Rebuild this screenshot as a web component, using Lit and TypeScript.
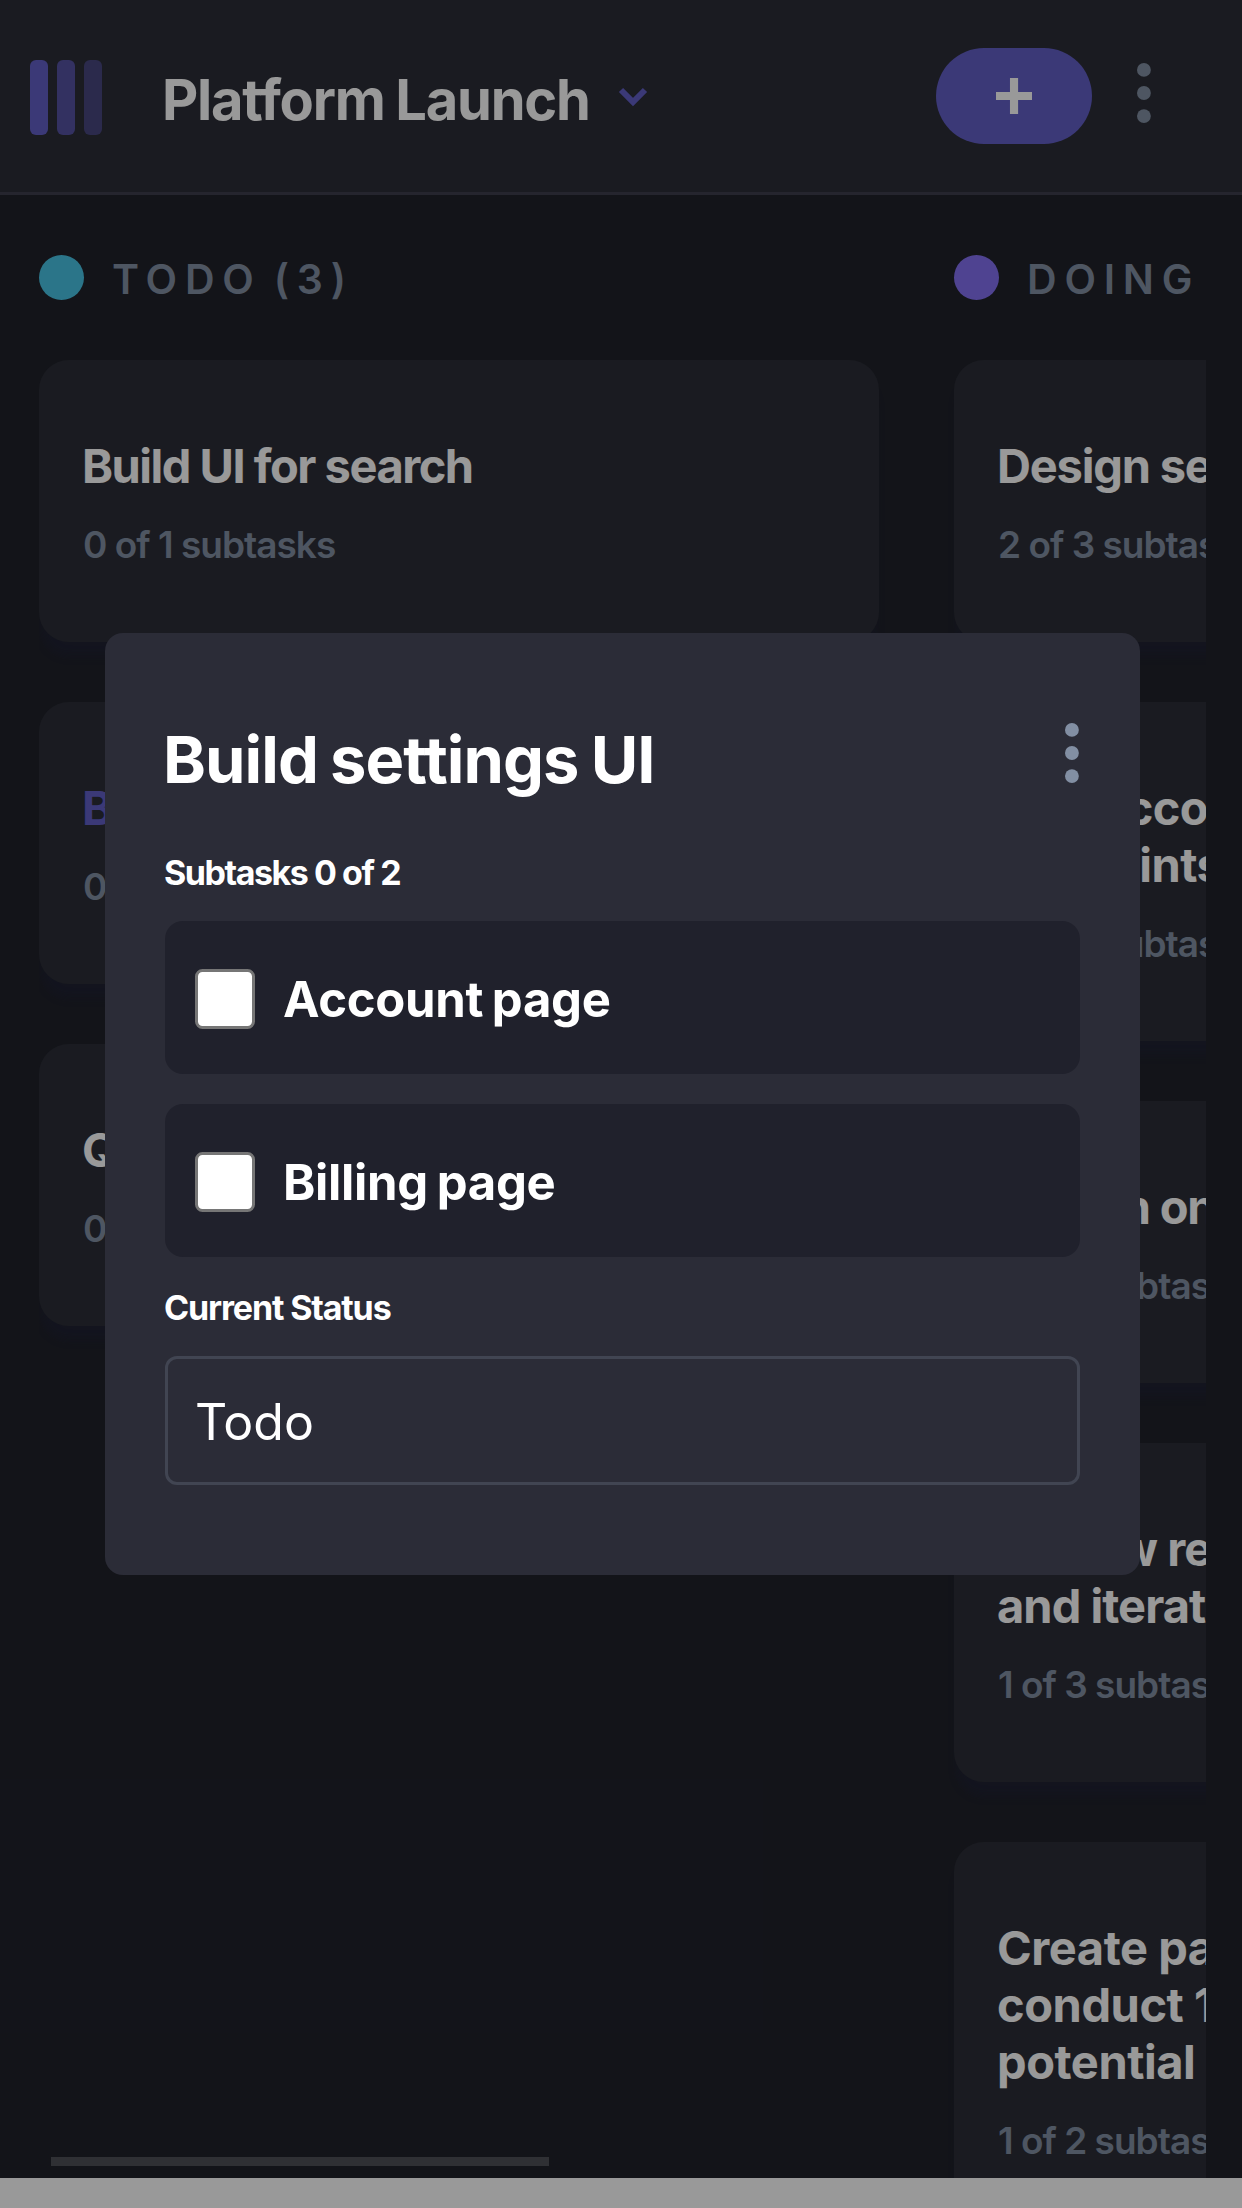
import { LitElement, html, css, svg } from "lit";
import { customElement, property } from "lit/decorators.js";
import { styleMap } from "lit/directives/style-map.js";
import { classMap } from "lit/directives/class-map.js";

interface Task {
  lines: string[];
  done: number;
  total: number;
  tracking: number;
  active?: boolean;
}

interface Column {
  name: string;
  tone: "teal" | "violet";
  tasks: Task[];
}

const COLUMNS: Column[] = [
  {
    name: "TODO (3)",
    tone: "teal",
    tasks: [
      { lines: ["Build UI for search"], done: 0, total: 1, tracking: -1.5 },
      { lines: ["Build settings UI"], done: 0, total: 2, tracking: -1.5, active: true },
      { lines: ["QA and test all major user journeys"], done: 0, total: 2, tracking: -1.5 },
    ],
  },
  {
    name: "DOING (6)",
    tone: "violet",
    tasks: [
      { lines: ["Design settings screen"], done: 2, total: 3, tracking: -1.2 },
      { lines: ["Add account management", "endpoints"], done: 2, total: 3, tracking: -0.6 },
      { lines: ["Design onboarding flow"], done: 1, total: 3, tracking: -1.2 },
      { lines: ["Review results of usability tests", "and iterate"], done: 1, total: 3, tracking: -0.95 },
      {
        lines: ["Create paper prototypes and", "conduct 10 usability tests with", "potential customers"],
        done: 1,
        total: 2,
        tracking: -0.45,
      },
    ],
  },
];

const dots = svg`
  <circle cx="2.308" cy="2.308" r="2.308"/>
  <circle cx="2.308" cy="10" r="2.308"/>
  <circle cx="2.308" cy="17.692" r="2.308"/>`;

@customElement("board-header")
export class BoardHeader extends LitElement {
  static styles = css`
    :host {
      display: flex;
      align-items: center;
      box-sizing: border-box;
      height: 195px;
      padding: 0 90px 0 30px;
      background: #2c2e37;
      border-bottom: 3px solid #3e3f4e;
    }
    .logo {
      width: 72px;
      height: 75px;
      margin-top: 3px;
    }
    .title {
      width: 456px;
      margin: 8px 0 0 60px;
      font-size: 56px;
      line-height: 70px;
      font-weight: 700;
      letter-spacing: -1.24px;
      word-spacing: -1.2px;
      white-space: nowrap;
      color: #fff;
    }
    .chevron {
      width: 30px;
      height: 21px;
      margin-top: 3px;
      overflow: visible;
    }
    .add {
      display: flex;
      align-items: center;
      justify-content: center;
      width: 156px;
      height: 96px;
      margin-left: auto;
      border-radius: 48px;
      background: #635fc7;
    }
    .plus {
      width: 36px;
      height: 36px;
    }
    .more {
      width: 15px;
      height: 60px;
      margin: -6px 0 0 45px;
      fill: #828fa3;
    }
  `;

  render() {
    return html`
      <svg class="logo" viewBox="0 0 24 25" fill="#635fc7">
        <rect width="6" height="25" rx="2" />
        <rect x="9" width="6" height="25" rx="2" opacity=".75" />
        <rect x="18" width="6" height="25" rx="2" opacity=".5" />
      </svg>
      <div class="title">Platform Launch</div>
      <svg class="chevron" viewBox="0 0 10 7" fill="none" stroke="#635fc7" stroke-width="2">
        <path d="m1 1 4 4 4-4" />
      </svg>
      <div class="add">
        <svg class="plus" viewBox="0 0 12 12" fill="#fff">
          <path d="M7.368 12V7.344H12V4.632H7.368V0H4.656v4.632H0v2.712h4.656V12z" />
        </svg>
      </div>
      <svg class="more" viewBox="0 0 5 20">${dots}</svg>
    `;
  }
}

@customElement("task-card")
export class TaskCard extends LitElement {
  @property({ attribute: false }) task!: Task;

  static styles = css`
    :host {
      display: block;
      box-sizing: border-box;
      width: 840px;
      padding: 77px 43px 75px;
      border-radius: 30px;
      background: #2c2e37;
      box-shadow: 0 17px 8px -3px rgba(34, 36, 72, 0.28);
      white-space: nowrap;
    }
    .name {
      margin-bottom: 28px;
      font-size: 47px;
      line-height: 57px;
      font-weight: 700;
      color: #fff;
    }
    .active {
      color: #635fc7;
    }
    .count {
      margin-left: 1px;
      font-size: 37px;
      line-height: 45px;
      font-weight: 600;
      letter-spacing: -1px;
      color: #828fa3;
    }
  `;

  render() {
    const t = this.task;
    return html`
      <div
        class=${classMap({ name: true, active: !!t.active })}
        style=${styleMap({ letterSpacing: `${t.tracking}px` })}
      >
        ${t.lines.map((line) => html`<div>${line}</div>`)}
      </div>
      <div class="count">${t.done} of ${t.total} subtasks</div>
    `;
  }
}

@customElement("task-dialog")
export class TaskDialog extends LitElement {
  static styles = css`
    :host {
      display: block;
      box-sizing: border-box;
      width: 1035px;
      padding: 87px 60px 90px;
      border-radius: 18px;
      background: #2b2c37;
      color: #fff;
      white-space: nowrap;
    }
    .top {
      display: flex;
      justify-content: space-between;
      align-items: flex-start;
      margin-bottom: 52px;
    }
    .title {
      margin-left: -2px;
      font-size: 65px;
      line-height: 80px;
      font-weight: 700;
      letter-spacing: -0.94px;
      word-spacing: -2.35px;
    }
    .more {
      width: 15px;
      height: 60px;
      margin-top: 3px;
      fill: #828fa3;
    }
    .label {
      margin: 0 0 27px -1px;
      font-size: 34px;
      line-height: 42px;
      font-weight: 700;
    }
    .progress {
      letter-spacing: -1.45px;
    }
    .status {
      letter-spacing: -1.15px;
    }
    .subtasks {
      display: flex;
      flex-direction: column;
      gap: 30px;
      margin-bottom: 30px;
    }
    .subtask {
      display: flex;
      align-items: center;
      gap: 28px;
      box-sizing: border-box;
      height: 153px;
      padding: 3px 30px 0;
      border-radius: 18px;
      background: #20212c;
      font-size: 49px;
      line-height: 60px;
      font-weight: 700;
      letter-spacing: -0.3px;
      word-spacing: -2.5px;
    }
    .text {
      margin-top: 2px;
    }
    .box {
      box-sizing: border-box;
      width: 60px;
      height: 60px;
      border: 3px solid #767676;
      border-radius: 7.5px;
      background: #fff;
    }
    .select {
      display: flex;
      align-items: center;
      box-sizing: border-box;
      height: 129px;
      padding: 3px 27px 0;
      border: 3px solid rgba(130, 143, 163, 0.25);
      border-radius: 12px;
      font-size: 50px;
      line-height: 60px;
    }
  `;

  render() {
    return html`
      <div class="top">
        <div class="title">Build settings UI</div>
        <svg class="more" viewBox="0 0 5 20">${dots}</svg>
      </div>
      <div class="label progress">Subtasks 0 of 2</div>
      <div class="subtasks">
        ${["Account page", "Billing page"].map(
          (s) => html`<div class="subtask"><span class="box"></span><span class="text">${s}</span></div>`,
        )}
      </div>
      <div class="label status">Current Status</div>
      <div class="select">Todo</div>
    `;
  }
}

@customElement("app-root")
export class AppRoot extends LitElement {
  static styles = css`
    :host {
      display: block;
      position: relative;
      height: 2208px;
      overflow: hidden;
      background: #fff;
      font-family: Inter, "Liberation Sans", sans-serif;
    }
    .page {
      display: flex;
      flex-direction: column;
      height: 2178px;
      background: #20222b;
    }
    .board {
      position: relative;
      flex: 1;
      min-height: 0;
      display: flex;
      gap: 75px;
      margin: 0 36px 0 39px;
      padding-top: 60px;
      overflow: hidden;
    }
    .column {
      flex: none;
      width: 840px;
    }
    .head {
      display: flex;
      align-items: center;
      gap: 28px;
      height: 45px;
      margin-bottom: 60px;
    }
    .dot {
      flex: none;
      width: 45px;
      height: 45px;
      border-radius: 50%;
    }
    .teal {
      background: #49c4e5;
    }
    .violet {
      background: #8471f2;
    }
    .label {
      margin-top: 3px;
      font-size: 41px;
      line-height: 50px;
      font-weight: 600;
      letter-spacing: 7.8px;
      word-spacing: -6px;
      white-space: nowrap;
      color: #828fa3;
    }
    .cards {
      display: flex;
      flex-direction: column;
      gap: 60px;
    }
    .scroll-thumb {
      position: absolute;
      left: 12px;
      bottom: 12px;
      width: 498px;
      height: 9px;
      background: #4f5057;
    }
    .backdrop {
      position: absolute;
      inset: 0;
      display: grid;
      place-items: center;
      padding-left: 3px;
      background: rgba(0, 0, 0, 0.4);
    }
  `;

  render() {
    return html`
      <div class="page">
        <board-header></board-header>
        <div class="board">
          ${COLUMNS.map(
            (c) => html`
              <section class="column">
                <div class="head">
                  <span class="dot ${c.tone}"></span>
                  <span class="label">${c.name}</span>
                </div>
                <div class="cards">${c.tasks.map((t) => html`<task-card .task=${t}></task-card>`)}</div>
              </section>
            `,
          )}
          <div class="scroll-thumb"></div>
        </div>
      </div>
      <div class="backdrop"><task-dialog></task-dialog></div>
    `;
  }
}
